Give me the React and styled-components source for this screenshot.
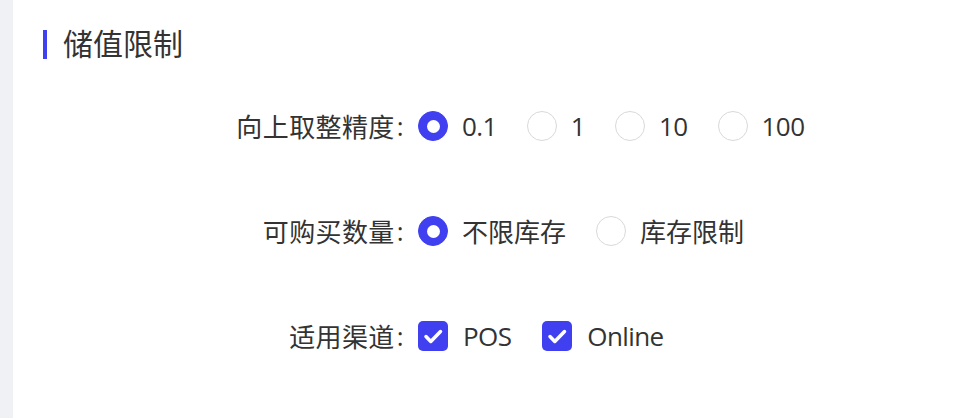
import styled, { createGlobalStyle } from 'styled-components'

const GlobalStyle = createGlobalStyle`
  html, body {
    margin: 0;
    padding: 0;
    background: #ffffff;
  }
  body {
    font-family: 'Open Sans', 'Noto Sans CJK SC', sans-serif;
    color: #333333;
  }
`

const BLUE = '#4040F0'

const Page = styled.div`
  display: flex;
  width: 974px;
  height: 418px;
  overflow: hidden;
`

const Sidebar = styled.div`
  flex: none;
  width: 13px;
  background: #f0f1f5;
`

const Main = styled.div`
  flex: 1;
  padding: 29px 0 0 30px;
`

const Title = styled.div`
  display: flex;
  align-items: center;
  gap: 16px;
`

const TitleBar = styled.span`
  width: 4px;
  height: 29px;
  background: ${BLUE};
`

const TitleText = styled.h2`
  margin: 0;
  font-size: 30px;
  font-weight: 400;
  line-height: 30px;
  color: #333333;
`

const Form = styled.div`
  display: grid;
  grid-template-columns: 375px 1fr;
  grid-auto-rows: 48px;
  row-gap: 57px;
  margin-top: 43px;
  font-size: 26px;
`

const Label = styled.div`
  display: flex;
  align-items: center;
  justify-content: flex-end;
  padding-right: 14px;
  white-space: nowrap;
  letter-spacing: 0.4px;

  &::after {
    content: ':';
    margin-left: 2px;
  }
`

const Options = styled.div`
  display: flex;
  align-items: center;
`

const Option = styled.label`
  display: inline-flex;
  align-items: center;
  margin-right: ${p => p.$gap}px;
  cursor: pointer;
`

const OptionText = styled.span`
  padding: 0 ${p => p.$pad}px;
  white-space: nowrap;
  letter-spacing: ${p => (p.$latin ? '-0.6px' : 'normal')};
`

const RadioDot = styled.span`
  box-sizing: border-box;
  width: 30px;
  height: 30px;
  border-radius: 50%;
  border: 1px solid ${p => (p.$checked ? BLUE : '#d9d9d9')};
  background: ${p => (p.$checked ? BLUE : '#ffffff')};
  display: flex;
  align-items: center;
  justify-content: center;

  &::after {
    content: '';
    display: ${p => (p.$checked ? 'block' : 'none')};
    width: 13px;
    height: 13px;
    border-radius: 50%;
    background: #ffffff;
  }
`

const CheckBox = styled.span`
  box-sizing: border-box;
  width: 30px;
  height: 30px;
  border-radius: 5px;
  background: ${BLUE};
  display: flex;
  align-items: center;
  justify-content: center;
`

const isLatin = s => /^[\x00-\x7f]+$/.test(s)

function Radio({ label, checked }) {
  return (
    <Option $gap={16}>
      <RadioDot $checked={checked} />
      <OptionText $pad={14} $latin={isLatin(label)}>{label}</OptionText>
    </Option>
  )
}

function Check({ label }) {
  return (
    <Option $gap={16}>
      <CheckBox>
        <svg width="30" height="30" viewBox="0 0 30 30">
          <polyline
            points="8,15.5 12.8,20.5 22.5,10.5"
            fill="none"
            stroke="#ffffff"
            strokeWidth="3.5"
            strokeLinecap="round"
            strokeLinejoin="round"
          />
        </svg>
      </CheckBox>
      <OptionText $pad={15} $latin={isLatin(label)}>{label}</OptionText>
    </Option>
  )
}

const precision = ['0.1', '1', '10', '100']
const stock = ['不限库存', '库存限制']
const channels = ['POS', 'Online']

export default function App() {
  return (
    <Page>
      <GlobalStyle />
      <Sidebar />
      <Main>
        <Title>
          <TitleBar />
          <TitleText>储值限制</TitleText>
        </Title>
        <Form>
          <Label>向上取整精度</Label>
          <Options>
            {precision.map((p, i) => (
              <Radio key={p} label={p} checked={i === 0} />
            ))}
          </Options>

          <Label>可购买数量</Label>
          <Options>
            {stock.map((s, i) => (
              <Radio key={s} label={s} checked={i === 0} />
            ))}
          </Options>

          <Label>适用渠道</Label>
          <Options>
            {channels.map(c => (
              <Check key={c} label={c} />
            ))}
          </Options>
        </Form>
      </Main>
    </Page>
  )
}
